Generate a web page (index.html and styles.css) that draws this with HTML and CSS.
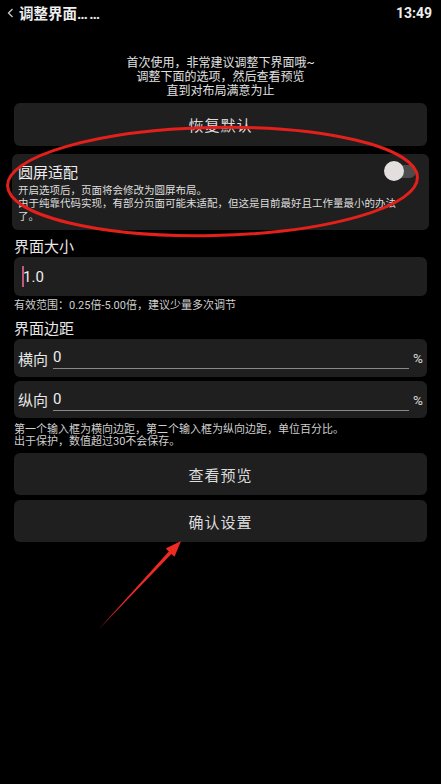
FILE: index.html
```html
<!DOCTYPE html>
<html>
<head>
    <meta charset="utf-8">
    <title>调整界面</title>
    <link rel="stylesheet" href="styles.css">
</head>
<body>
    <div id="page">
        <div class="topbar">
            <div class="title">
                <svg class="back" width="7" height="10" viewBox="0 0 7 10"><path d="M5.5 1 L1.5 5 L5.5 9" fill="none" stroke="#ccc" stroke-width="1.3"/></svg>
                <span>调整界面<span class="dots">……</span></span>
            </div>
            <div class="clock">13:49</div>
        </div>

        <div class="intro">
            首次使用，非常建议调整下界面哦~<br>
            调整下面的选项，然后查看预览<br>
            直到对布局满意为止
        </div>

        <div class="content">
            <div class="btn">恢复默认</div>

            <div class="card switch-card">
                <div class="switch-row">
                    <span class="switch-title">圆屏适配</span>
                    <div class="toggle">
                        <div class="toggle-track"></div>
                        <div class="toggle-knob"></div>
                    </div>
                </div>
                <div class="switch-desc">开启选项后，页面将会修改为圆屏布局。<br>由于纯靠代码实现，有部分页面可能未适配，但这是目前最好且工作量最小的办法了。</div>
            </div>

            <div class="label">界面大小</div>
            <div class="card size-input">
                <span class="cursor"></span><span>1.0</span>
            </div>
            <div class="hint">有效范围：0.25倍-5.00倍，建议少量多次调节</div>

            <div class="label label-gap">界面边距</div>
            <div class="card margin-row">
                <span class="row-label">横向</span>
                <div class="underline">0</div>
                <span class="unit">%</span>
            </div>
            <div class="card margin-row second">
                <span class="row-label">纵向</span>
                <div class="underline">0</div>
                <span class="unit">%</span>
            </div>
            <div class="hint hint-tight">第一个输入框为横向边距，第二个输入框为纵向边距，单位百分比。<br>出于保护，数值超过30不会保存。</div>

            <div class="btn btn-preview">查看预览</div>
            <div class="btn btn-confirm">确认设置</div>
        </div>

        <!-- red markup drawn over the screenshot -->
        <svg class="annotations" width="441" height="784" viewBox="0 0 441 784">
            <ellipse cx="212.5" cy="181.5" rx="205" ry="54" fill="none" stroke="#e3201b" stroke-width="3" transform="rotate(-1.2 212.5 181.5)"/>
            <polygon points="98,630 171.4,553.9 174.5,556.8 181,541 165.7,548.6 168.8,551.5" fill="#ee2a22"/>
        </svg>
    </div>
</body>
</html>
```

FILE: styles.css
```css
* {
    margin: 0;
    padding: 0;
    box-sizing: border-box;
}

body {
    background: #000;
    color: #e8e8e8;
    font-family: Roboto, "Noto Sans CJK SC", sans-serif;
    width: 441px;
    min-height: 784px;
    overflow: hidden;
}

#page {
    position: relative;
    min-height: 784px;
}

.topbar {
    height: 25px;
    display: flex;
    align-items: center;
    justify-content: space-between;
    padding: 0 9px 0 7px;
}

.title {
    display: flex;
    align-items: center;
    gap: 5px;
    font-size: 14.5px;
    font-weight: bold;
    color: #eee;
}

.dots {
    letter-spacing: 1.5px;
}

.back {
    display: block;
}

.clock {
    font-size: 14px;
    font-weight: bold;
    color: #eee;
}

.intro {
    margin-top: 30.5px;
    text-align: center;
    font-size: 12px;
    line-height: 14px;
    color: #e0e0e0;
}

.content {
    display: flex;
    flex-direction: column;
    padding: 0 14px;
    margin-top: 5.5px;
}

.card,
.btn {
    background: #1f1f1f;
    border-radius: 6px;
}

.btn {
    height: 43px;
    display: flex;
    align-items: center;
    justify-content: center;
    font-size: 15px;
    letter-spacing: 1px;
    color: #ddd;
}

.switch-card {
    margin: 8px -2px 0;
    height: 76px;
    padding: 7px 12px 0 6px;
}

.switch-row {
    display: flex;
    align-items: center;
    justify-content: space-between;
    height: 20px;
}

.switch-title {
    font-size: 15px;
    color: #eee;
}

.toggle {
    position: relative;
    width: 32px;
    height: 20px;
    margin-right: 1px;
}

.toggle-track {
    position: absolute;
    right: 0;
    top: 4px;
    width: 26px;
    height: 13px;
    border-radius: 7px;
    background: #4c4c4c;
}

.toggle-knob {
    position: absolute;
    left: 0;
    top: 0;
    width: 20px;
    height: 20px;
    border-radius: 50%;
    background: #e4dfdf;
}

.switch-desc {
    margin-top: 2.5px;
    padding-right: 7px;
    font-size: 10.5px;
    line-height: 13px;
    color: #ddd;
}

.label {
    margin-top: 6.5px;
    font-size: 15px;
    line-height: 20px;
    color: #e8e8e8;
}

.size-input {
    height: 39px;
    margin-top: 0.5px;
    display: flex;
    align-items: center;
    padding-left: 8px;
    font-size: 15px;
    color: #eee;
}

.cursor {
    display: inline-block;
    width: 2px;
    height: 21px;
    background: #c2577e;
    margin-right: -1px;
}

.hint {
    margin-top: 3px;
    font-size: 11px;
    line-height: 14px;
    color: #cfcfcf;
}

.label-gap {
    margin-top: 5.5px;
}

.margin-row {
    height: 38px;
    margin-top: 0.5px;
    display: flex;
    align-items: center;
    padding: 0 4px;
    font-size: 15px;
    color: #e8e8e8;
}

.margin-row.second {
    margin-top: 4px;
    height: 37px;
}

.row-label {
    margin-right: 5px;
}

.underline {
    flex: 1;
    height: 22px;
    line-height: 20px;
    border-bottom: 1.5px solid #8a8a8a;
    color: #eee;
}

.unit {
    margin-left: 4px;
    font-size: 13.5px;
    color: #ddd;
}

.hint-tight {
    margin-top: 6px;
    line-height: 12px;
}

.btn-preview {
    margin-top: 5px;
    height: 42px;
}

.btn-confirm {
    margin-top: 5px;
    height: 42px;
}

.annotations {
    position: absolute;
    left: 0;
    top: 0;
    pointer-events: none;
}
```
